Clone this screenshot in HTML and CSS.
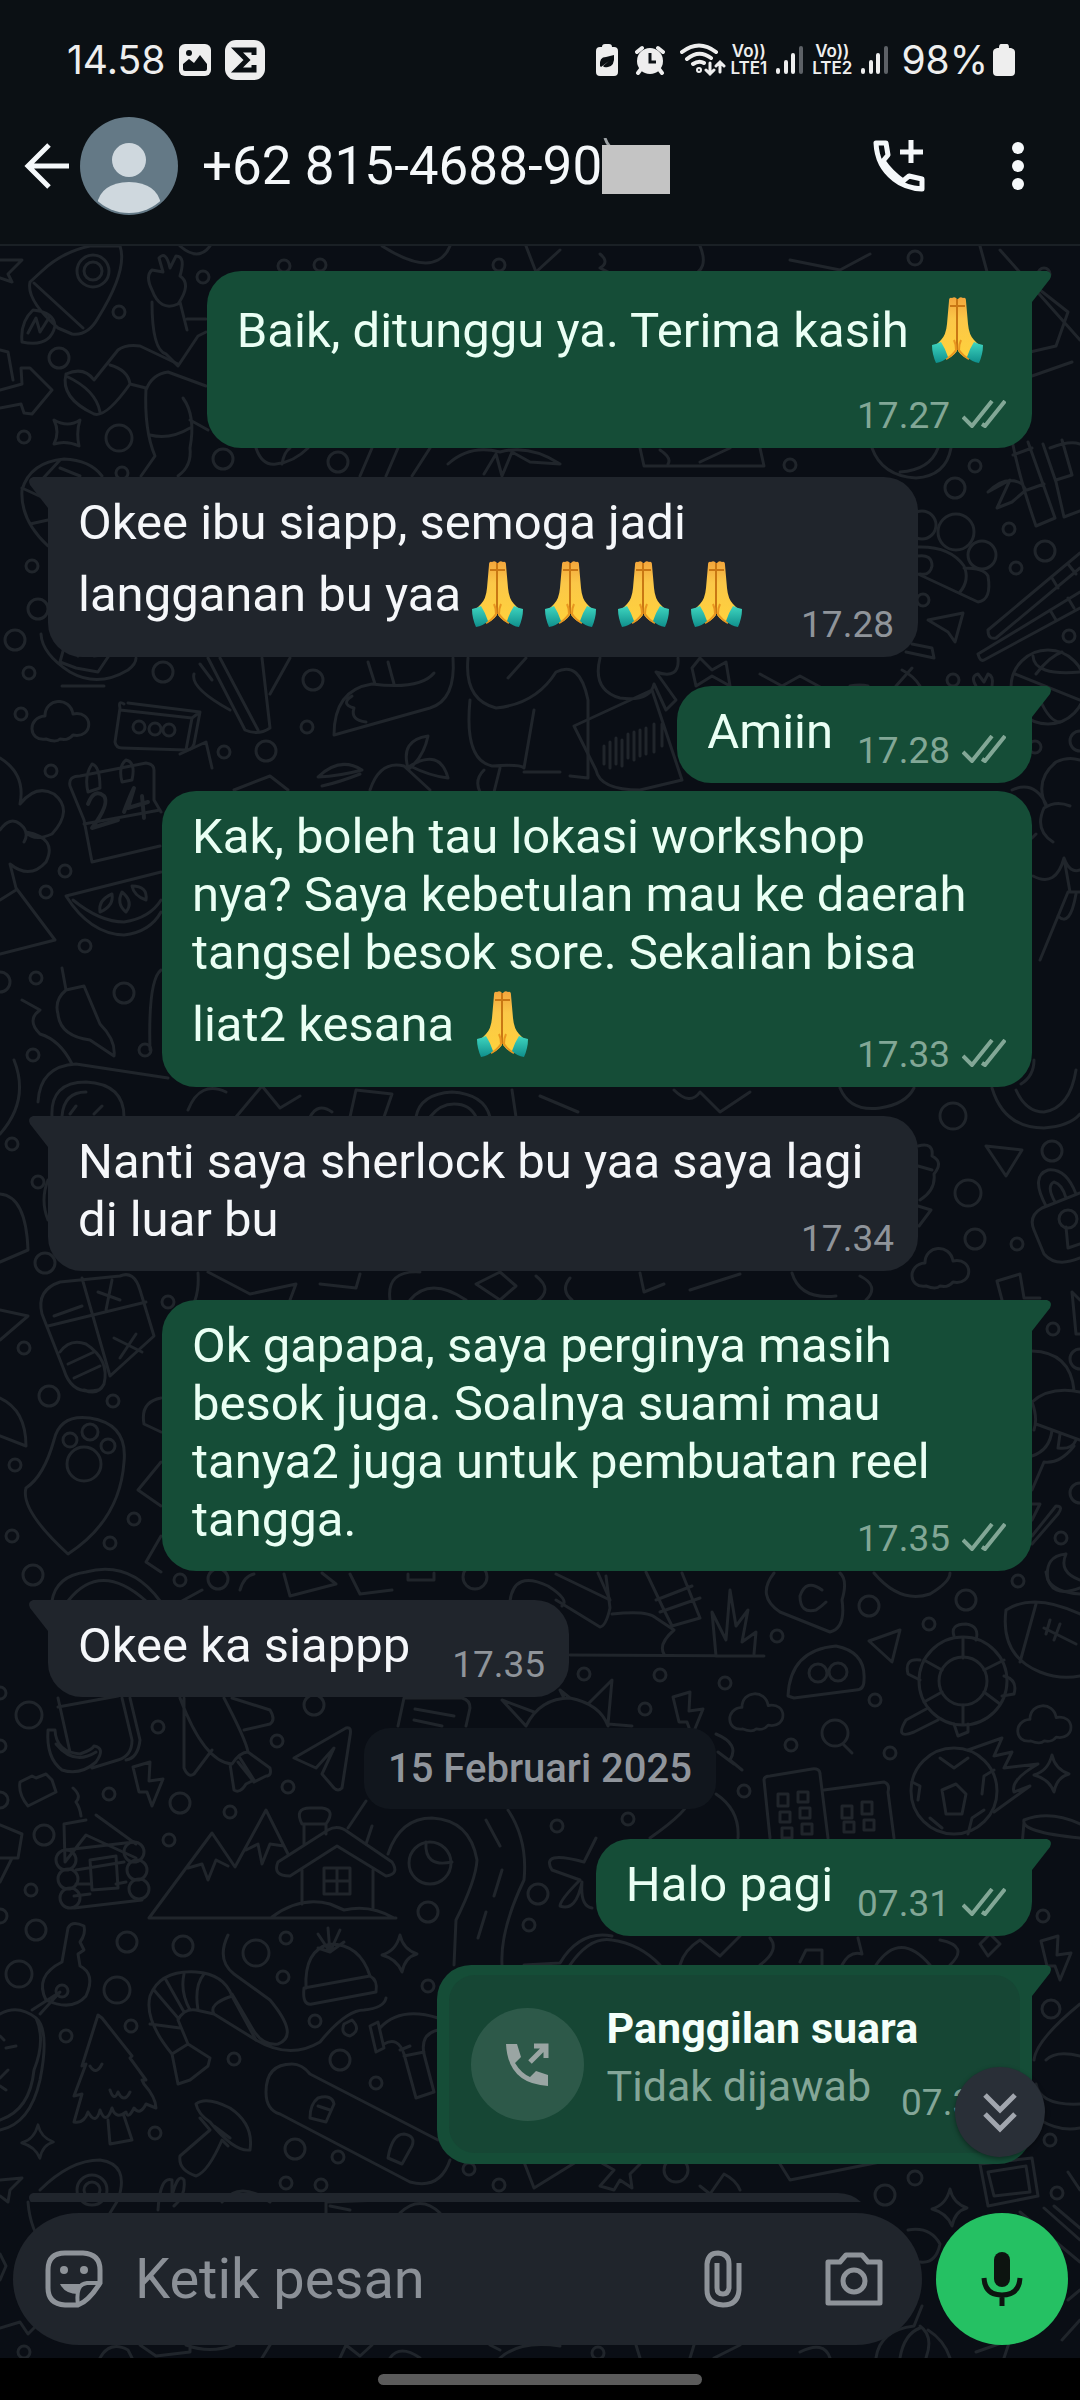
FILE: index.html
```
<!DOCTYPE html>
<html lang="id">
<head>
    <meta charset="UTF-8">
    <meta name="viewport" content="width=device-width, initial-scale=1.0">
    <title>Chat</title>
    <link rel="stylesheet" href="styles.css">
</head>
<body>
    <!-- Shared symbols -->
    <svg class="symbols" aria-hidden="true">
        <defs>
            <linearGradient id="skin" x1="0" y1="0" x2="0" y2="1">
                <stop offset="0" stop-color="#f2a53c"/>
                <stop offset="0.35" stop-color="#fbc748"/>
                <stop offset="1" stop-color="#ffd23c"/>
            </linearGradient>
            <linearGradient id="cuff" x1="0" y1="0" x2="0" y2="1">
                <stop offset="0" stop-color="#3fd6c0"/>
                <stop offset="1" stop-color="#0f8f8c"/>
            </linearGradient>
            <symbol id="pray" viewBox="0 0 73 82">
                <path fill="url(#skin)" d="M36 11Q34 8 31 10Q28 9 28 13L26 36Q25 47 20 52L15 57L24 71Q31 70 36 63Z"/>
                <path fill="url(#skin)" d="M37 11Q39 8 42 10Q45 9 45 13L47 36Q48 47 53 52L58 57L49 71Q42 70 37 63Z"/>
                <path fill="none" stroke="#c97714" stroke-width="2" d="M36 11V62M29 18H44"/>
                <path fill="none" stroke="#e9961f" stroke-width="2" d="M33 52Q35 56 35 62Q31 68 25 71M40 52Q38 56 38 62Q42 68 48 71"/>
                <path fill="url(#cuff)" d="M11 57Q16 56 20 54Q24 60 27 69Q22 74 15 75Q11 66 11 57Z"/>
                <path fill="url(#cuff)" d="M62 57Q57 56 53 54Q49 60 46 69Q51 74 58 75Q62 66 62 57Z"/>
            </symbol>
            <symbol id="ticks" viewBox="0 0 44 28">
                <path fill="none" stroke="currentColor" stroke-width="4" d="M1 17L10 26L30 1M20 24L23 26L43 1"/>
            </symbol>
            <symbol id="signal" viewBox="0 0 27 30">
                <path fill="none" stroke="currentColor" stroke-width="4" stroke-linecap="round" d="M2 25V27M10 17V27M17 10V27"/>
                <path fill="none" stroke="#5d6166" stroke-width="4" stroke-linecap="round" d="M25 3V27"/>
            </symbol>
            <symbol id="cloud" viewBox="-32 -22 64 44">
                <path d="M-14 17C-32 20-33-5-15-6C-15-24 10-26 13-8C34-12 34 17 13 13C9 18 5 18 0 17Q-4 21-14 17Z"/>
            </symbol>
            <symbol id="spark" viewBox="-22 -22 44 44">
                <path d="M0-19Q3-5 17 0Q5 3 2 18Q-3 5-18 1Q-4-3 0-19Z"/>
            </symbol>
            <symbol id="bolt" viewBox="-18 -24 36 48">
                <path d="M-15-17L2-22L1-3L15-5L4 22L-1 8H-9Z"/>
            </symbol>
        </defs>
    </svg>

    <div class="status-bar">
        <div class="status-left">
            <span class="status-text">14.58</span>
            <svg width="32" height="32" viewBox="0 0 32 32"><rect width="32" height="32" rx="6" fill="#eee"/><path fill="#0b1014" d="M4 25V20L10 15L15 19L21 11L28 20V25Q28 27 26 27H6Q4 27 4 25Z"/><circle cx="10" cy="9" r="3" fill="#0b1014"/></svg>
            <svg class="sigma" width="40" height="40" viewBox="0 0 40 40"><rect width="40" height="40" rx="11" fill="#eee"/><path fill="none" stroke="#0b1014" stroke-width="5" d="M29 15V10H12L22 20L12 30H29V25"/></svg>
        </div>
        <div class="status-right">
            <svg class="saver" width="22" height="32" viewBox="0 0 22 32"><path fill="#eee" d="M6 3Q6 0 9 0H13Q16 0 16 3H18Q22 3 22 7V28Q22 32 18 32H4Q0 32 0 28V7Q0 3 4 3Z"/><path fill="#0b1014" d="M4 22Q3 13 10 13L18 11Q19 22 12 23Q8 24 7 22L13 17L5 23Z"/></svg>
            <svg class="alarm" width="30" height="30" viewBox="0 0 30 30"><g fill="none" stroke="#eee" stroke-width="4" stroke-linecap="round"><path d="M2 7L7 3M28 7L23 3M6 24L3 28M24 24L27 28"/></g><circle cx="15" cy="16" r="13" fill="#eee"/><path fill="none" stroke="#0b1014" stroke-width="3" d="M15 8V17H21"/></svg>
            <svg width="46" height="34" viewBox="0 0 46 34" fill="none" stroke="#eee" stroke-width="4" stroke-linecap="round"><path d="M2 9Q19-4 36 9M7 16Q19 6 31 15M13 21Q19 17 24 20"/><circle cx="19" cy="27" r="1"/><path stroke-width="3" d="M30 20V31M26 27L30 31L34 27M40 29V19M36 23L40 19L44 23"/></svg>
            <span class="network"><span>Vo))</span><span>LTE1</span></span>
            <svg class="bars" width="27" height="30"><use href="#signal"/></svg>
            <span class="network"><span>Vo))</span><span>LTE2</span></span>
            <svg class="bars" width="27" height="30"><use href="#signal"/></svg>
            <span class="status-text">98%</span>
            <svg class="battery" width="22" height="32" viewBox="0 0 22 32"><path fill="#eee" d="M6 4Q6 0 8 0H14Q16 0 16 4H18Q22 5 22 8V28Q22 32 18 32H4Q0 32 0 28V8Q0 5 4 4Z"/></svg>
        </div>
    </div>

    <header class="chat-header">
        <button class="icon-button" aria-label="Kembali">
            <svg width="46" height="48" viewBox="0 0 46 48" fill="none" stroke="#f5f8fa" stroke-width="5"><path d="M45 24H4M25 3L4 24L25 45"/></svg>
        </button>
        <svg class="avatar" width="98" height="98" viewBox="0 0 98 98">
            <clipPath id="round"><circle cx="49" cy="49" r="47"/></clipPath>
            <circle cx="49" cy="49" r="49" fill="#647986"/>
            <g fill="#cfd8de" clip-path="url(#round)"><circle cx="49" cy="43" r="17"/><path d="M17 88Q20 66 49 65Q78 66 81 88V98H17Z"/></g>
        </svg>
        <h1 class="contact-name">+62 815-4688-90<svg class="redacted" width="70" height="56" viewBox="0 0 70 56"><path fill="none" stroke="#9da2a5" stroke-width="3" d="M3 0Q4 4 8 9"/><path fill="#c4c4c4" d="M0 7H68V56H0Z"/></svg></h1>
        <div class="header-actions">
            <button class="icon-button" aria-label="Panggil">
                <svg width="54" height="54" viewBox="0 0 54 54" fill="none" stroke="#f5f8fa" stroke-width="5" stroke-linejoin="round"><path d="M4 4H14L16 16L11 22Q19 34 31 42L37 37L50 40V50Q33 49 22 40Q5 27 4 4Z"/><path d="M39 1V24M28 13H51"/></svg>
            </button>
            <button class="icon-button" aria-label="Menu">
                <svg width="12" height="48" viewBox="0 0 12 48" fill="#f5f8fa"><circle cx="6" cy="6" r="6"/><circle cx="6" cy="24" r="6"/><circle cx="6" cy="42" r="6"/></svg>
            </button>
        </div>
    </header>

    <main class="chat">
        <!-- Doodle wallpaper -->
        <svg class="wallpaper" viewBox="0 246 1080 2112" preserveAspectRatio="xMidYMin slice" aria-hidden="true">
            <g id="dots"></g>
            <!-- upper left: rocket, hand, arrow, sock, star, ball -->
            <path d="M42 271Q62 252 90 246H120Q128 270 98 318Q88 336 72 334L58 328Q26 300 30 282ZM34 283L83 328M33 310Q20 322 22 342Q50 348 55 326Q54 312 33 310ZM28 333L36 318L40 332L50 316"/>
            <circle cx="93" cy="271" r="16"/><circle cx="93" cy="271" r="9"/>
            <path d="M152 290Q145 276 152 270L163 272L159 258Q166 250 170 268L176 256Q186 256 180 276Q192 284 178 304Q160 312 152 290ZM152 302Q152 350 166 354L178 366L198 336L206 332M180 302L187 330M187 319H206"/>
            <path d="M0 390L22 384L21 368L30 368L52 390L32 414L24 413L21 404L0 408M0 350L8 352L13 380"/>
            <path d="M66 374Q84 366 94 380L118 350Q126 344 140 346L178 364M66 374Q60 398 94 414Q106 418 130 384L146 388M66 376Q96 390 100 412M110 365Q128 370 130 384"/>
            <path d="M54 420Q68 428 80 420Q76 432 79 446Q66 440 54 444Q60 432 54 420ZM0 260L22 260L8 274L12 282L0 278"/>
            <path d="M146 390Q152 374 168 372L206 386M146 388Q144 430 155 456L141 476M183 398Q196 416 190 448Q192 466 178 476M150 435Q170 440 190 428M190 420L208 430"/>
            <path d="M48 546Q20 520 22 490Q30 462 64 459Q90 460 102 476M36 486L60 460M22 488L48 500M30 524L48 520M60 468L80 476"/>
            <path d="M382 246Q420 270 438 260Q446 256 450 246M526 246L536 272L560 250M180 246Q198 262 210 246M600 254Q610 262 600 268L612 274M700 246Q710 270 690 276M790 260L840 270L870 254M980 246L992 290M1000 250L1080 340M1040 290L1068 312L1056 346L1030 352M1032 376L1072 362"/>
            <path d="M256 448Q262 466 276 464Q294 462 308 448M282 464Q284 452 290 448M372 448L360 476M398 448L386 476M430 448L412 476M448 464Q470 444 500 452Q530 444 560 464L530 462L512 452L502 476L496 454L484 474M640 448L644 466H764L760 448M660 450Q672 458 668 464M700 462L730 448"/>
            <!-- right: bamboo, beads, chopsticks, ball -->
            <path d="M872 448Q882 476 916 478Q946 476 951 448M900 472Q930 470 938 448M1013 445Q1020 480 1036 526L1055 518L1043 484L1028 442M1013 455L1032 448M1027 490L1044 484M1043 444L1056 482L1064 517L1080 511M1056 480L1072 475L1062 440M1050 448Q1070 440 1080 444M988 492Q1006 474 1022 484L1026 490L1012 502L997 508L1010 480Z"/>
            <path d="M918 547Q950 546 964 566Q970 580 960 592M918 574L978 602Q992 600 988 576Q984 568 964 568M918 556Q932 554 932 566Q930 576 920 574"/>
            <path d="M988 630L1080 553M996 638L1080 568M988 630Q988 640 996 638M978 654L1080 592M984 660L1080 608M978 654Q980 662 984 660M1052 578L1058 588M1068 564L1076 574M1050 610L1056 620M1068 598L1074 608"/>
            <path d="M928 620L963 613L955 642L948 632ZM902 670Q914 676 920 686M912 644L932 648L934 658L906 652M976 686Q970 676 978 674L984 682L988 674Q994 676 992 686"/>
            <circle cx="1048" cy="687" r="37"/><path d="M1015 674L1080 700M1033 656Q1034 676 1080 672M1036 674Q1050 656 1062 652M1040 700Q1050 722 1060 722"/>
            <path d="M1046 806Q1034 780 1056 762Q1068 756 1080 760M1053 842Q1034 830 1044 808Q1056 800 1070 806M1012 790Q1034 780 1046 804M1033 876Q1056 888 1064 858Q1070 874 1080 870M1064 858L1070 892H1080M1068 892L1040 960M1058 916Q1070 928 1076 894M1032 838L1036 834"/>
            <!-- centre band above the short reply -->
            <path d="M41 634Q42 654 70 672Q98 688 128 670Q136 664 136 658M60 662L66 640L78 656L86 634L94 656L110 654L98 672L76 668ZM62 686H104"/>
            <use href="#cloud" x="28" y="700" width="64" height="44"/>
            <path d="M124 704Q118 700 120 708L115 742Q116 748 122 748L186 750Q192 750 194 744L200 712L128 703M120 710L192 718L186 750M192 718L200 712"/>
            <circle cx="139" cy="727" r="6"/><circle cx="155" cy="729" r="6"/><circle cx="169" cy="730" r="6"/>
            <path d="M208 658L245 730Q258 736 270 728L262 658M220 658L258 730M290 658L270 694M194 674Q190 688 230 710M200 664L212 680"/>
            <path d="M334 735Q334 690 372 684Q420 690 434 673M334 735L430 708Q456 700 453 658M352 696Q340 704 354 708Q350 720 366 722M375 684L368 662M394 684L388 662"/>
            <path d="M468 658Q464 700 496 708Q536 704 556 672Q580 660 588 700V778L570 776M508 678L526 658M470 700Q464 760 492 766Q520 764 524 768L534 710M484 770Q474 780 480 792M500 768L494 792M524 772H560"/>
            <path d="M600 658Q592 690 620 698Q650 702 654 684L666 710L676 700L656 672Q680 680 678 658M574 726L652 690L682 780L640 790Q600 790 596 770ZM604 746V764M610 742V768M616 738V764M622 740V766M628 734V758M634 732V760M640 730V756M646 728V754M654 724V752M662 724V746"/>
            <path d="M692 668L700 658L712 670L726 662L730 686L712 676L696 686ZM760 674L782 686L800 676L822 688M850 686Q860 684 868 686M896 686L912 668"/>
            <path d="M370 790Q380 760 404 766L430 790M318 777Q340 756 362 770Q340 776 318 777ZM322 786Q340 782 360 774M408 768Q400 740 428 736Q424 756 410 768ZM410 766Q440 748 448 778Q430 776 410 766M180 754L206 742L212 768M234 790L270 776L288 790"/>
            <!-- left column: flower, calendar, melon -->
            <path d="M0 758Q26 774 20 804Q36 784 54 794Q74 810 52 834Q34 842 26 832Q58 838 46 862Q30 880 10 864L16 888L55 940L0 954M0 830Q10 816 20 824Q30 832 24 842M16 890L0 900"/>
            <path d="M70 786Q68 776 80 776L146 763Q154 764 154 770L154 800L161 812M70 786L84 820L92 862L160 846M84 824L160 810M88 792Q84 776 92 764Q100 766 100 788ZM122 782Q118 766 126 760Q136 762 132 780Z"/>
            <path class="bold" d="M88 804Q94 788 104 796Q110 804 92 828L118 820M124 812Q130 796 134 788L128 808L148 802M142 796L144 818"/>
            <path d="M66 896L161 872M66 896Q90 934 124 935Q150 932 161 912M73 900Q100 922 124 922Q150 918 161 900"/>
            <path d="M100 912Q98 900 112 894Q114 906 100 912ZM126 912Q116 904 122 892Q134 902 126 912ZM146 900Q134 896 132 886Q148 886 146 900Z"/>
            <path d="M62 968L66 990Q54 1000 58 1014Q60 1036 90 1040L114 1056Q116 1040 100 1024L84 986L66 990M22 1000L40 1010Q26 1020 40 1034Q60 1040 72 1064M150 1050Q148 980 161 970"/>
            <path d="M0 1134Q30 1100 14 1060M38 1102Q40 1066 76 1064L168 1078M52 1117Q50 1082 86 1082Q124 1084 124 1117M62 1116Q64 1092 86 1092M70 1114L76 1106M94 1114L102 1106"/>
            <!-- band around the long received reply -->
            <path d="M188 1110Q200 1080 226 1092M236 1117L262 1086L280 1108L300 1096M310 1117Q318 1102 332 1112M350 1117L356 1090L392 1094L384 1117M416 1117Q420 1094 452 1092Q484 1094 490 1117M430 1117Q440 1104 454 1104Q470 1104 476 1117M516 1117L512 1090M540 1096L578 1112M674 1090Q690 1106 700 1092L720 1112L750 1092M840 1088Q850 1112 880 1108Q906 1104 914 1088"/>
            <path d="M992 1088Q1004 1128 1044 1128Q1070 1126 1080 1114M1016 1090Q1026 1112 1044 1112Q1070 1108 1076 1070M1021 1084Q1034 1076 1034 1060"/>
            <path d="M986 1146L1022 1150L1006 1176ZM918 1146Q934 1142 932 1156Q944 1162 934 1174Q936 1190 920 1200M918 1206L931 1210L919 1226M918 1166L932 1170"/>
            <path d="M1046 1206Q1030 1176 1048 1170Q1066 1168 1076 1194M1055 1202Q1046 1186 1054 1182Q1062 1184 1066 1198M1080 1193L1042 1208Q1028 1216 1034 1230L1044 1254Q1056 1268 1080 1258"/>
            <circle cx="1068" cy="1219" r="9"/><path d="M1066 1227L1068 1248L1080 1244"/>
            <use href="#cloud" x="908" y="1246" width="64" height="46"/>
            <path d="M1002 1300L997 1281L1020 1274L1024 1298L1040 1298M1072 1292L1076 1334H1080M1072 1292L1080 1300"/>
            <path d="M0 1194Q26 1196 28 1250L0 1262M48 1220Q40 1200 48 1180M0 1310L28 1316L0 1340"/>
            <path d="M42 1314Q36 1290 60 1282L120 1276Q134 1270 140 1290L154 1336L110 1376M42 1314L64 1370Q72 1396 98 1390M82 1278L110 1376M48 1326L146 1302M54 1316L82 1306M98 1292L120 1300M112 1280L106 1310M114 1338L142 1352M136 1334L120 1358M60 1352Q70 1338 86 1344Q110 1360 104 1384Q98 1396 84 1390M68 1364L94 1352M74 1378L100 1366"/>
            <path d="M198 1273Q200 1300 186 1316M208 1272L250 1294L296 1284L290 1300M320 1284L356 1288L360 1274M390 1300Q386 1270 420 1272M410 1300Q430 1276 466 1300M476 1284L500 1272L516 1286L500 1300ZM536 1276Q554 1290 536 1302M570 1278Q560 1290 572 1300M640 1273L644 1292L664 1284M690 1290L740 1274M792 1273Q800 1300 836 1296M866 1300Q880 1286 860 1276"/>
            <!-- left: bear paw; right: mushroom, socks, moon -->
            <circle cx="70" cy="1440" r="7"/><circle cx="90" cy="1432" r="8"/><circle cx="108" cy="1446" r="7"/><circle cx="84" cy="1464" r="17"/>
            <path d="M68 1554Q20 1510 26 1488Q44 1476 54 1440Q60 1414 90 1418Q128 1424 124 1462Q120 1520 68 1554ZM0 1398Q26 1410 26 1446L0 1436M161 1398Q140 1402 144 1424L161 1432M161 1462L138 1490L161 1506M161 1536L146 1562L161 1572"/>
            <path d="M1032 1351Q1070 1352 1074 1390M1032 1402Q1050 1386 1080 1392M1036 1424L1080 1440M1032 1402Q1038 1418 1034 1430M1032 1456Q1050 1450 1052 1430M1060 1434L1058 1448Q1072 1450 1076 1440M1074 1446Q1060 1464 1044 1462L1032 1490M1032 1504L1040 1504L1032 1520M1032 1536L1056 1506Q1064 1506 1058 1514L1032 1544"/>
            <path d="M1066 1554Q1044 1556 1048 1580Q1054 1592 1080 1594M1066 1554Q1058 1572 1080 1580"/>
            <path d="M52 1601Q56 1576 86 1572Q130 1560 160 1601M68 1601Q100 1560 146 1601M182 1601L202 1590M240 1590Q244 1576 254 1574M284 1574L290 1596L336 1584L322 1573M350 1574L360 1594L392 1590M408 1574V1580H434V1573M510 1601Q514 1570 548 1586Q570 1600 562 1606M556 1574L610 1600L598 1573"/>
            <path d="M556 1600L600 1627Q606 1626 610 1608L606 1576M646 1572L664 1610L672 1626L700 1618L682 1573M656 1600L692 1586M660 1612L700 1598M612 1614Q648 1610 656 1618L674 1630Q658 1644 664 1654M570 1655L764 1656M716 1656L712 1612L726 1640L730 1590L736 1626L748 1610L742 1642L756 1632L754 1654"/>
            <path d="M774 1573Q756 1596 780 1612L830 1632Q846 1628 842 1600Q848 1580 840 1573M822 1590Q806 1578 800 1596Q800 1614 816 1610Q822 1606 826 1602M874 1573Q900 1604 930 1594Q950 1582 950 1573M1046 1572Q1050 1600 1080 1588"/>
            <path d="M788 1696Q790 1650 836 1646Q866 1652 864 1680Q864 1690 856 1690L794 1698ZM900 1630L869 1641L892 1662ZM1006 1610Q1034 1592 1080 1614M1006 1610Q1000 1656 1040 1672Q1060 1680 1080 1676M1036 1604L1020 1662M1044 1628L1076 1644M1050 1620L1046 1634M1060 1624L1054 1640"/>
            <circle cx="818" cy="1673" r="9"/><circle cx="838" cy="1672" r="9"/><circle cx="963" cy="1681" r="44"/><circle cx="963" cy="1681" r="24"/>
            <path d="M954 1636Q950 1624 966 1624Q980 1626 976 1640M920 1660Q904 1658 908 1674L920 1680M1004 1676Q1018 1680 1014 1694L1002 1696M928 1708L906 1720Q894 1740 914 1732L938 1720M954 1724L958 1736L968 1732L968 1724M963 1658V1638M984 1670L1004 1660M984 1692L1000 1704M963 1705V1724M942 1692L924 1702M942 1670L924 1660"/>
            <!-- bottom doodles, below the date -->
            <path d="M58 1698L70 1752M58 1707L118 1696M122 1698L132 1740Q132 1756 118 1760L92 1768M130 1698L140 1740Q138 1758 126 1760M48 1730H55Q56 1752 80 1754Q92 1750 94 1746Q106 1748 96 1762Q80 1776 62 1770Q46 1758 48 1730ZM56 1744Q74 1766 96 1752"/>
            <path d="M184 1698V1768Q188 1778 194 1774L212 1750M180 1698Q204 1762 232 1764M224 1698Q246 1740 248 1752M232 1698L270 1710Q276 1720 270 1724L244 1730M232 1764Q240 1752 248 1752L270 1768Q272 1776 266 1776L254 1782M230 1764L234 1790Q240 1794 246 1784L254 1780L240 1758M238 1762L254 1782M294 1758L346 1728Q352 1726 350 1736L342 1788Q338 1792 334 1788L322 1774L334 1748L316 1768Z"/>
            <path d="M398 1726L404 1698H462Q470 1700 470 1708L466 1726M415 1709L454 1716M414 1720L442 1726M526 1726L502 1700L534 1712M526 1726Q540 1698 570 1698Q600 1704 608 1726M570 1698L560 1690L564 1698M588 1704L612 1680L608 1724L632 1726"/>
            <use href="#bolt" x="130" y="1760" width="36" height="48"/><use href="#bolt" x="670" y="1690" width="36" height="48"/><use href="#bolt" x="1038" y="1934" width="36" height="48"/>
            <use href="#cloud" x="726" y="1690" width="60" height="46"/><use href="#cloud" x="1014" y="1702" width="60" height="46"/>
            <path d="M20 1782L32 1776L36 1778L46 1774L52 1780L56 1792L28 1806Q18 1794 20 1782ZM73 1788Q82 1796 76 1802Q80 1808 81 1816"/>
            <circle cx="835" cy="1733" r="13"/><path d="M843 1744L852 1753"/>
            <circle cx="954" cy="1791" r="43"/><path d="M940 1758L954 1768L968 1758M942 1790L956 1784L966 1794L962 1814H946ZM912 1782L920 1786L918 1800M994 1770L984 1776L982 1794M930 1818L942 1828M984 1810L972 1818L968 1834M968 1750L1002 1738L994 1756L1012 1752L1004 1768L1038 1764Q1010 1780 1014 1792L1030 1786L994 1812"/>
            <use href="#spark" x="1030" y="1752" width="44" height="44"/>
            <path d="M770 1838L764 1780Q764 1776 770 1776L812 1769Q820 1768 820 1774L828 1838M824 1790L884 1782Q890 1784 888 1792L894 1838M778 1794H788V1806H778ZM798 1792H808V1802H798ZM780 1812H790V1822H780ZM800 1808H810V1818H800ZM842 1806H852V1818H842ZM862 1802H872V1814H862ZM844 1822H854V1832H844ZM864 1820H874V1830H864ZM782 1828H792V1838H782ZM802 1824H812V1834H802Z"/>
            <path d="M1024 1820Q1050 1810 1080 1824M1024 1820Q1020 1832 1080 1838M1024 1822L1020 1870M716 1734Q740 1744 730 1760L742 1770M718 1752L734 1764M716 1794Q740 1810 738 1838M690 1798Q690 1810 650 1838"/>
            <path d="M65 1862L86 1835L136 1858M65 1862L64 1824L86 1820M65 1850L134 1842M96 1815L136 1844M76 1870L124 1862M76 1884H90M74 1896L90 1894M116 1884L126 1882M74 1908L142 1900M90 1860L116 1856L118 1888L92 1890Z"/>
            <circle cx="66" cy="1860" r="10"/><circle cx="68" cy="1879" r="10"/><circle cx="70" cy="1898" r="10"/><circle cx="134" cy="1852" r="10"/><circle cx="137" cy="1870" r="10"/><circle cx="139" cy="1889" r="10"/>
            <path d="M149 1918L212 1833L235 1867L266 1810L288 1854M188 1868L202 1864L208 1880L216 1860L228 1866M246 1850L258 1844L262 1864L270 1844L284 1846M149 1918H396M272 1917Q300 1896 330 1904L344 1910Q370 1904 394 1918"/>
            <path d="M278 1862L328 1830Q338 1824 348 1832L392 1862Q400 1874 386 1876L337 1846L290 1876Q272 1876 278 1862ZM302 1870V1904M373 1870V1908M304 1845V1824M326 1834V1824M302 1824Q294 1808 310 1808H322Q336 1810 326 1824ZM324 1868H350V1894H324ZM337 1868V1894M324 1881H350"/>
            <circle cx="430" cy="1863" r="21"/><path d="M426 1842Q424 1868 452 1862"/>
            <path d="M348 1828L366 1801M366 1844L372 1826M388 1854Q400 1818 432 1818Q470 1820 477 1860Q476 1880 456 1920L454 1965M508 1810Q528 1840 524 1880Q500 1930 502 1965M486 1820L500 1846M502 1870L494 1896M486 1912L478 1938"/>
            <path d="M584 1862Q540 1850 552 1870L580 1880Q560 1900 560 1906Q576 1912 582 1882Q580 1906 592 1908M596 1838L584 1862M0 1825L22 1834L18 1858L0 1858M12 1858L0 1882"/>
            <path d="M62 1962L68 1928Q72 1920 84 1926Q86 1934 80 1942L84 1950L78 1954L80 1966Q96 1974 86 1996Q72 2012 46 2000Q34 1976 62 1962ZM32 2010L60 1992L40 2014"/>
            <circle cx="62" cy="1991" r="6"/>
            <path d="M0 2014Q18 2004 36 2018Q46 2040 34 2070Q30 2110 0 2120M36 2018Q50 2030 40 2080Q30 2124 0 2130M0 2036L4 2040M6 2048L16 2046M0 2078L8 2070M0 2086L6 2090"/>
            <path d="M98 2015L82 2066L86 2064L74 2096L82 2094L74 2122Q84 2124 88 2112Q96 2126 100 2110Q106 2126 112 2108Q116 2120 126 2112Q128 2120 134 2108Q140 2116 146 2104L156 2108Q156 2098 144 2084L142 2080L146 2080L130 2058L132 2056L102 2018ZM90 2066Q96 2076 102 2064M110 2090Q114 2102 118 2092Q124 2104 130 2092M108 2120L110 2144L132 2140L124 2116"/>
            <use href="#spark" x="18" y="2118" width="40" height="48"/><use href="#spark" x="378" y="1932" width="44" height="44"/>
            <path d="M172 2054Q144 2020 150 1996Q160 1970 196 1972Q224 1974 232 1996L256 2040L214 2014Q208 2004 232 1996M172 2054L188 2044L178 2020Q184 2008 196 2010L214 2014M172 2054L178 2084L190 2080L208 2066L210 2058L188 2044M154 1990L178 2018M166 1980L184 2012M184 1974Q180 1992 190 2010M204 1974Q194 1986 198 2010M150 2024L180 2028"/>
            <path d="M228 1935Q216 1960 234 1974L270 2000Q300 2036 278 2044Q262 2046 252 2028L232 1994M256 2040Q290 2060 320 2042Q346 2010 364 2010Q384 2008 386 1998M344 2024Q340 2034 350 2036Q362 2030 352 2020Z"/>
            <path d="M306 1988Q304 1950 330 1944Q360 1944 370 1976M304 1988L370 1976Q378 1980 376 1992L312 2004Q302 2006 304 1988ZM330 1952L318 1934M330 1952L328 1928M330 1952L340 1930M330 1952L344 1942M330 1952L318 1948"/>
            <path d="M370 2026L378 2022L384 2048L376 2052ZM380 2028Q400 2006 438 2018M384 2044Q398 2036 404 2054L416 2098L434 2092L424 2054Q420 2034 438 2030M404 2056L424 2052"/>
            <path d="M266 2092Q266 2064 292 2064Q302 2064 310 2074L438 2140M266 2092Q266 2110 280 2114L410 2182Q440 2190 450 2160M310 2118Q310 2104 318 2098Q332 2094 334 2104L326 2122ZM318 2106L330 2110M388 2158Q392 2134 404 2134Q416 2136 412 2146L402 2164Z"/>
            <path d="M196 2104Q206 2096 230 2108Q254 2124 250 2150Q234 2152 210 2122Q198 2114 196 2104ZM200 2118L210 2130L180 2156Q178 2170 196 2176Q208 2172 222 2140L228 2146M214 2126L230 2138M40 2190Q70 2160 100 2160Q130 2164 118 2200L110 2213M0 2180L22 2178L10 2190L8 2202L0 2196"/>
            <circle cx="92" cy="2190" r="15"/><circle cx="92" cy="2190" r="8"/>
            <path d="M158 2210Q160 2176 172 2180L172 2196Q178 2172 184 2180Q186 2196 174 2206M222 2202Q240 2180 270 2202M330 2206L350 2210M28 2202Q30 2230 46 2250M326 2213V2202L382 2200M400 2213Q420 2194 440 2213M524 2162L534 2188L576 2162M600 2162L614 2170L600 2186L614 2190L620 2180L632 2188L630 2174L640 2164M700 2186L710 2194L724 2174Q736 2180 740 2190M780 2164L790 2180L880 2162"/>
            <path d="M980 2164L1032 2158L1038 2196L988 2206ZM988 2172L1026 2166L1030 2192L994 2196ZM1068 2172L1080 2190M524 1965L560 1963Q580 1930 612 1936M570 1965Q590 1936 612 1940Q640 1944 660 1965M680 1965Q684 1950 700 1940L720 1956L740 1936M760 1965Q780 1950 770 1938M800 1962L806 1950H822V1965M842 1965Q850 1950 862 1954L858 1938M876 1965Q900 1930 930 1965M940 1940Q970 1946 950 1965M980 1944L990 1934L1000 1944L988 1956Z"/>
            <path d="M1034 2060Q1036 2040 1080 2004M1040 2120Q1060 2132 1080 2128M1046 2060Q1056 2050 1080 2056M1036 2084Q1040 2106 1080 2104M400 2050L410 2046"/>
            <use href="#spark" x="928" y="2186" width="44" height="44"/>
            <!-- strip behind the message box -->
            <path d="M1044 2208L1080 2240M1054 2206L1080 2228M1020 2212L1080 2262M908 2230Q930 2226 940 2244Q936 2264 920 2262M1062 2340L1080 2320M1068 2300L1080 2290M0 2254L6 2266L0 2280M0 2328L20 2322L28 2334L42 2320M100 2358Q110 2340 128 2350L132 2358M140 2345L156 2356L190 2352V2345M186 2345Q210 2354 234 2345M262 2358L270 2345M340 2358L346 2345L360 2356L372 2345M390 2358Q400 2344 420 2358M500 2358Q520 2340 560 2346M490 2345L500 2350M640 2358L636 2345M690 2358L694 2345M714 2358L740 2345M800 2352Q824 2340 830 2358M876 2358Q880 2330 914 2326L922 2306M900 2358Q904 2334 920 2328M926 2358Q934 2336 920 2326M950 2358Q944 2340 928 2330M976 2352L1010 2340L1004 2358"/>
        </svg>

        <div class="messages">
            <div class="message out tail stacked">
                <p>Baik, ditunggu ya. Terima kasih <svg class="emoji" role="img" aria-label="tangan menyatu"><use href="#pray"/></svg></p>
                <div class="meta-row"><span class="meta">17.27<svg class="ticks"><use href="#ticks"/></svg></span></div>
            </div>

            <div class="message in tail">
                <p>Okee ibu siapp, semoga jadi langganan bu yaa<svg class="emoji" role="img" aria-label="tangan menyatu"><use href="#pray"/></svg><svg class="emoji"><use href="#pray"/></svg><svg class="emoji"><use href="#pray"/></svg><svg class="emoji"><use href="#pray"/></svg><span class="meta meta-tall">17.28</span></p>
            </div>

            <div class="message out tail">
                <p>Amiin<span class="meta">17.28<svg class="ticks"><use href="#ticks"/></svg></span></p>
            </div>

            <div class="message out follow">
                <p>Kak, boleh tau lokasi workshop nya? Saya kebetulan mau ke daerah tangsel besok sore. Sekalian bisa liat2 kesana <svg class="emoji" role="img" aria-label="tangan menyatu"><use href="#pray"/></svg><span class="meta meta-tall">17.33<svg class="ticks"><use href="#ticks"/></svg></span></p>
            </div>

            <div class="message in tail">
                <p>Nanti saya sherlock bu yaa saya lagi di luar bu<span class="meta">17.34</span></p>
            </div>

            <div class="message out tail">
                <p>Ok gapapa, saya perginya masih besok juga. Soalnya suami mau tanya2 juga untuk pembuatan reel tangga.<span class="meta">17.35<svg class="ticks"><use href="#ticks"/></svg></span></p>
            </div>

            <div class="message in tail">
                <p>Okee ka siappp<span class="meta">17.35</span></p>
            </div>

            <div class="date">15 Februari 2025</div>

            <div class="message out tail">
                <p>Halo pagi<span class="meta">07.31<svg class="ticks"><use href="#ticks"/></svg></span></p>
            </div>

            <div class="message out tail call">
                <div class="call-card">
                    <span class="call-icon">
                        <svg width="46" height="46" viewBox="0 0 46 46"><path fill="#9aa5a3" d="M2 2H13L17 15L11 21Q17 31 26 35L32 29L44 33V44Q4 42 2 2Z"/><path fill="none" stroke="#9aa5a3" stroke-width="5" d="M26 20L42 4M30 4H42V16"/></svg>
                    </span>
                    <div class="call-text">
                        <strong>Panggilan suara</strong>
                        <div class="call-status">
                            <span>Tidak dijawab</span>
                            <span class="call-time">07.31</span>
                        </div>
                    </div>
                </div>
            </div>

            <div class="message in tail next"></div>
        </div>

        <button class="scroll-down" aria-label="Ke pesan terbaru">
            <svg width="34" height="44" viewBox="0 0 34 44" fill="none" stroke="#a1a6ae" stroke-width="5"><path d="M2 5L17 20L32 5M2 24L17 39L32 24"/></svg>
        </button>

        <form class="composer">
            <div class="composer-box">
                <button type="button" class="icon-button" aria-label="Emoji">
                    <svg width="58" height="58" viewBox="0 0 58 58" fill="none" stroke="#8e9399" stroke-width="5"><path d="M33 55H20Q3 54 3 38V20Q3 3 20 3H38Q55 4 55 20V33Q44 51 33 55Z"/><path stroke-width="4" d="M33 55Q30 34 42 33H55"/><path fill="#8e9399" stroke="none" d="M15 34H42Q33 37 33 44Q20 44 15 34Z"/><g fill="#8e9399" stroke="none"><circle cx="19" cy="20" r="4"/><circle cx="39" cy="20" r="4"/></g></svg>
                </button>
                <input class="composer-input" type="text" placeholder="Ketik pesan" aria-label="Ketik pesan">
                <button type="button" class="icon-button clip" aria-label="Lampirkan">
                    <svg width="38" height="58" viewBox="0 0 38 58" fill="none" stroke="#8e9399" stroke-width="5"><path d="M35 13V40Q34 55 19 55Q3 54 3 40V14Q4 3 14 3Q25 4 25 14V38Q24 44 19 44Q13 44 13 38V13"/></svg>
                </button>
                <button type="button" class="icon-button" aria-label="Kamera">
                    <svg width="58" height="54" viewBox="0 0 58 54" fill="none" stroke="#8e9399" stroke-width="5"><path stroke-linejoin="round" d="M3 10H15L21 3H37L43 10H55V51H3Z"/><circle cx="29" cy="29" r="11"/></svg>
                </button>
            </div>
            <button type="button" class="mic" aria-label="Rekam suara">
                <svg width="42" height="56" viewBox="0 0 42 56" fill="none" stroke="#0d1410" stroke-width="5"><rect x="13" y="1" width="16" height="35" rx="8" fill="#0d1410" stroke="none"/><path d="M3 27Q4 44 21 44Q38 44 39 27M21 44V55"/></svg>
            </button>
        </form>
    </main>

    <div class="nav-bar"><div class="nav-handle"></div></div>

    <script src="script.js"></script>
</body>
</html>
```
FILE: script.js
```
// Small bubbles scattered between the doodles: x, y, radius
const dots = [
    [119,312,6],[59,358,10],[24,437,6],[119,438,13],[284,266,6],[203,277,6],[320,265,6],[223,459,10],
    [338,462,10],[122,473,6],[32,566,6],[38,609,10],[15,640,10],[29,673,6],[163,672,10],[21,714,6],
    [313,680,10],[307,727,6],[224,752,6],[266,751,10],[51,771,6],[65,871,6],[46,892,6],[499,265,6],
    [915,258,7],[1044,274,6],[790,465,6],[975,466,6],[955,488,10],[922,525,14],[956,532,18],[982,555,14],
    [1009,529,6],[1045,551,10],[1016,568,6],[923,600,6],[1069,636,6],[953,680,6],[1035,747,6],[1080,741,10],
    [85,946,6],[36,978,6],[124,993,10],[145,1050,6],[33,1055,6],[0,982,10],[12,1144,6],[38,1182,6],
    [45,1263,10],[168,1302,6],[24,1348,6],[49,1396,10],[113,1401,6],[15,1465,6],[134,1519,6],[110,1543,6],
    [12,1536,6],[33,1575,10],[953,1116,13],[968,1193,13],[975,1239,10],[1017,1244,6],[1052,1151,10],
    [1053,1329,6],[1080,1359,10],[1080,1493,10],[1061,1538,6],[180,1580,6],[218,1579,10],[475,1577,12],
    [869,1606,10],[966,1600,10],[929,1624,6],[777,1636,6],[584,1674,6],[660,1675,6],[725,1683,6],
    [645,1709,6],[875,1700,6],[314,1705,10],[791,1745,6],[890,1753,6],[744,1791,6],[628,1819,6],
    [557,1826,6],[1018,1581,6],[29,1715,13],[158,1727,6],[277,1741,6],[109,1794,6],[180,1803,10],
    [288,1787,6],[230,1812,6],[169,1840,6],[44,1835,10],[31,1890,6],[36,1930,10],[127,1942,10],
    [183,1946,10],[256,1953,13],[286,1938,6],[19,1974,13],[117,1990,13],[283,1977,6],[428,1986,6],
    [428,1912,10],[538,1894,10],[529,1925,6],[315,2021,6],[131,2026,6],[66,2036,6],[234,2059,6],
    [340,2060,10],[376,2083,6],[155,2133,6],[295,2149,10],[338,2157,6],[286,2183,6],[321,2185,6],
    [469,2169,6],[499,2185,6],[1051,2009,9],[1050,2140,6],[915,2178,7],[885,2195,10],[1057,2193,6],
    [676,2170,12],[1043,1916,6],[24,2352,6],[598,2353,6],[0,1693,6],[0,1746,6],[0,1800,8],[0,1916,7]
];

const group = document.getElementById('dots');
dots.forEach(([x, y, r]) => {
    const circle = document.createElementNS('http://www.w3.org/2000/svg', 'circle');
    circle.setAttribute('cx', x);
    circle.setAttribute('cy', y);
    circle.setAttribute('r', r);
    group.appendChild(circle);
});
```
FILE: styles.css
```
* {
    box-sizing: border-box;
}

body {
    margin: 0;
    height: 100vh;
    display: flex;
    flex-direction: column;
    background: #0b1014;
    color: #f5f8fa;
    font-family: Roboto, 'Liberation Sans', sans-serif;
}

button {
    border: none;
    padding: 0;
    background: none;
    cursor: pointer;
}

.icon-button {
    display: flex;
}

.symbols {
    position: absolute;
    width: 0;
    height: 0;
}

/* Status bar */
.status-bar {
    flex: none;
    display: flex;
    justify-content: space-between;
    align-items: center;
    height: 112px;
    padding: 8px 65px 0 67px;
}

.status-left,
.status-right {
    display: flex;
    align-items: center;
}

.status-left {
    gap: 14px;
}

.status-text {
    font-family: Inter, Roboto, sans-serif;
    font-size: 39px;
    line-height: 44px;
    color: #eee;
}

.alarm {
    margin: 0 15px 0 17px;
}

.network {
    display: flex;
    flex-direction: column;
    align-items: center;
    margin-left: 4px;
    font-family: Inter, Roboto, sans-serif;
    font-size: 17px;
    font-weight: 600;
    line-height: 17px;
    color: #eee;
}

.bars {
    margin: 0 5px 0 9px;
    color: #eee;
}

.status-right .status-text {
    margin-left: 8px;
}

.battery {
    margin-left: 5px;
}

/* Header */
.chat-header {
    flex: none;
    display: flex;
    align-items: center;
    height: 134px;
    padding: 0 56px 24px 24px;
    border-bottom: 2px solid #1a2025;
}

.avatar {
    margin-left: 10px;
}

.contact-name {
    display: flex;
    align-items: center;
    margin: 0 0 0 24px;
    font-size: 53px;
    font-weight: 400;
    line-height: 62px;
    white-space: nowrap;
}

.header-actions {
    display: flex;
    align-items: center;
    gap: 86px;
    margin-left: auto;
}

/* Chat area */
.chat {
    position: relative;
    flex: 1;
    display: flex;
    flex-direction: column;
    min-height: 0;
    background: #0a0e15;
}

.wallpaper {
    position: absolute;
    inset: 0;
    width: 100%;
    height: 100%;
    fill: none;
    stroke: #20252b;
    stroke-width: 3;
    stroke-linejoin: round;
    stroke-linecap: round;
}

.wallpaper .bold {
    stroke-width: 4;
}

.messages {
    position: relative;
    flex: 1;
    min-height: 0;
    display: flex;
    flex-direction: column;
    padding: 25px 48px 0;
    overflow: hidden;
}

.message {
    position: relative;
    flex: none;
    max-width: 870px;
    margin-bottom: 29px;
    padding: 17px 60px 0 30px;
    border-radius: 34px;
    font-size: 49px;
    line-height: 58px;
}

.message p {
    display: flow-root;
    margin: 0;
}

.out {
    align-self: flex-end;
    background: #154d37;
    color: #eafff4;
}

.in {
    align-self: flex-start;
    padding-right: 48px;
    background: #20252c;
    color: #f5f7fa;
}

.out.tail {
    border-top-right-radius: 0;
}

.in.tail {
    border-top-left-radius: 0;
}

.tail::after {
    content: '';
    position: absolute;
    top: 0;
    left: 100%;
    width: 20px;
    height: 31px;
    background: inherit;
    clip-path: path('M0 0H15Q21 2 18 8L0 31Z');
}

.in.tail::after {
    left: -20px;
    clip-path: path('M20 0H5Q-1 2 2 8L20 31Z');
}

.follow {
    margin-top: -21px;
}

.emoji {
    width: 73px;
    height: 82px;
    vertical-align: -23px;
}

/* The time hangs into the right padding, the text does not */
.meta {
    float: right;
    display: flex;
    align-items: flex-end;
    height: 80px;
    margin: 0 -34px 0 24px;
    padding-bottom: 11px;
    font-size: 37px;
    line-height: 42px;
    color: #82a796;
}

.in .meta {
    margin: 0 -24px 0 42px;
    color: #8f949a;
}

.meta.meta-tall {
    height: 105px;
}

.stacked {
    padding-right: 38px;
}

.meta-row {
    display: flex;
    justify-content: flex-end;
}

.meta-row .meta {
    height: 78px;
    margin-right: -12px;
}

.ticks {
    width: 44px;
    height: 28px;
    margin: 0 0 9px 12px;
}

.date {
    align-self: center;
    margin: 2px 0 30px;
    padding: 12px 24px 11px;
    border-radius: 26px;
    background: #11161d;
    color: #90959c;
    font-size: 40px;
    font-weight: 500;
    line-height: 58px;
}

/* Call message */
.call {
    padding: 10px 12px 11px;
}

.call-card {
    display: flex;
    align-items: flex-start;
    padding: 24px 26px 32px 22px;
    border-radius: 26px;
    background: #164634;
}

.call-icon {
    display: flex;
    align-items: center;
    justify-content: center;
    width: 113px;
    height: 113px;
    margin-top: 9px;
    border-radius: 50%;
    background: #2d5949;
}

.call-text {
    margin-left: 23px;
    font-size: 43px;
    color: #84a698;
}

.call-text strong {
    color: #f4fffa;
}

.call-status {
    display: flex;
    height: 58px;
}

.call-time {
    margin: 17px 0 0 30px;
    font-size: 37px;
}

.next {
    width: 824px;
    height: 97px;
    margin-bottom: 0;
}

.scroll-down {
    position: absolute;
    right: 35px;
    bottom: 201px;
    display: flex;
    align-items: center;
    justify-content: center;
    width: 90px;
    height: 90px;
    border-radius: 50%;
    background: #292f37;
    box-shadow: 0 2px 5px rgba(0, 0, 0, 0.4);
}

/* Composer */
.composer {
    position: relative;
    display: flex;
    gap: 14px;
    padding: 11px 12px 13px 13px;
}

.composer-box {
    flex: 1;
    min-width: 0;
    display: flex;
    align-items: center;
    height: 132px;
    padding: 0 39px 0 32px;
    border-radius: 66px;
    background: #20252c;
}

.composer-input {
    flex: 1;
    min-width: 0;
    margin-left: 32px;
    padding: 0;
    border: none;
    outline: none;
    background: none;
    color: #f5f7fa;
    font-family: inherit;
    font-size: 56px;
    line-height: 66px;
}

.composer-input::placeholder {
    color: #8b9097;
    opacity: 1;
}

.clip {
    margin-right: 83px;
}

.mic {
    display: flex;
    align-items: center;
    justify-content: center;
    width: 132px;
    height: 132px;
    border-radius: 50%;
    background: #25c163;
}

/* System navigation */
.nav-bar {
    flex: none;
    display: flex;
    align-items: center;
    justify-content: center;
    height: 42px;
    background: #000;
}

.nav-handle {
    width: 30%;
    height: 11px;
    border-radius: 6px;
    background: #5b5b5b;
}
```
